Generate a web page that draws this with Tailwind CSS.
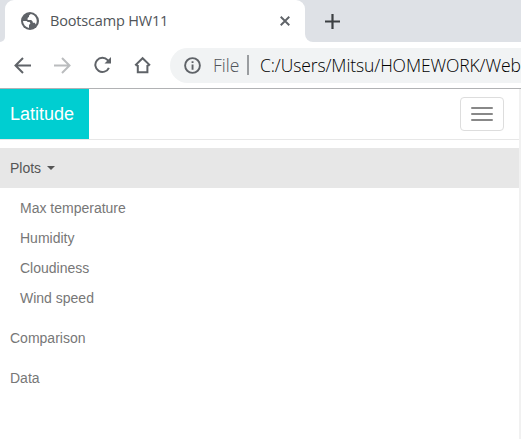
<!DOCTYPE html>
<html lang="en">
<head>
<meta charset="utf-8">
<title>Bootscamp HW11</title>
<script src="https://cdn.jsdelivr.net/npm/@tailwindcss/browser@4"></script>
</head>
<body class="w-[521px] h-[439px] overflow-hidden bg-white">
<div class="flex h-[439px] flex-col overflow-hidden">
  <div class="flex h-[42px] shrink-0 bg-white font-['Open_Sans',sans-serif]">
    <div class="h-full w-[5px] shrink-0 rounded-br-[5px] bg-[#dee1e6]"></div>
    <div class="h-full w-[300px] shrink-0 bg-[#dee1e6]">
      <div class="flex h-full items-center rounded-t-[9px] bg-white pl-4 pr-[15px]">
        <svg class="size-[18px] shrink-0" viewBox="0 0 18 18"><circle cx="9" cy="9" r="9" fill="#5f6368"/><path d="M9.8 2 8 3.4v1.4L6.6 6v2h3.6l1.6 1.8v1h2l1 1.6A7 7 0 0 0 9.8 2ZM2 9h3.6l1.2 1h1.8l.8 1.6-1.4 1.5v2.8A7 7 0 0 1 2 9Z" fill="#fff"/></svg>
        <div class="ml-[11px] whitespace-nowrap text-[14.5px] leading-5 tracking-[-0.17px] text-[#505458]">Bootscamp HW11</div>
        <svg class="ml-auto size-[10px]" viewBox="0 0 11 11" fill="none" stroke="#5f6368" stroke-width="2.1"><path d="m.8.8 9.4 9.4m0-9.4L.8 10.2"/></svg>
      </div>
    </div>
    <div class="flex h-full flex-1 items-center rounded-bl-[8px] bg-[#dee1e6] pl-5">
      <svg class="size-[15px]" viewBox="0 0 15 15" fill="none" stroke="#3c4043" stroke-width="2.2"><path d="M7.5 0v15M0 7.5h15"/></svg>
    </div>
  </div>
  <div class="flex h-[47px] shrink-0 items-center border-b border-[#b1b2b4] bg-white pl-[14px] font-['Open_Sans',sans-serif]">
    <svg class="size-[17px] shrink-0" viewBox="0 0 17 17" fill="none" stroke="#5f6368" stroke-width="2"><path d="M17 8.5H2M9 1 1.5 8.5 9 16"/></svg>
    <svg class="ml-[23px] size-[17px] shrink-0" viewBox="0 0 17 17" fill="none" stroke="#babcbe" stroke-width="2"><path d="M0 8.5h15M8 1l7.5 7.5L8 16"/></svg>
    <svg class="ml-[23px] size-[18px] shrink-0" viewBox="0 0 18 18"><path d="M14.9 11.8a7.1 7.1 0 1 1-1.2-7.7l1.2 1.4" fill="none" stroke="#5f6368" stroke-width="2"/><path d="M17 1v6.5h-6.5Z" fill="#5f6368"/></svg>
    <svg class="ml-[22px] size-[18px] shrink-0" viewBox="0 0 18 18" fill="none" stroke="#5f6368" stroke-width="2"><path d="M3.8 9v7.2h9.6V9M1.2 9.4 8.6 2.2 16 9.4M1.8 9.2h2M13.4 9.2h2"/></svg>
    <div class="ml-[18px] flex h-[35px] flex-1 items-center overflow-hidden rounded-l-full bg-[#f1f3f4] pl-[14px]">
      <svg class="size-[17px] shrink-0" viewBox="0 0 17 17"><circle cx="8.5" cy="8.5" r="7.4" fill="none" stroke="#5f6368" stroke-width="1.9"/><path d="M7.6 4.2h1.9v1.9H7.6ZM7.6 7.4h1.9v5.3H7.6Z" fill="#5f6368"/></svg>
      <div class="ml-3 w-[34px] shrink-0 whitespace-nowrap text-[17.5px] font-light leading-6 text-[#50545a]">File</div>
      <div class="h-5 w-[2px] shrink-0 bg-[#9a9da0]"></div>
      <div class="ml-[11px] shrink-0 whitespace-nowrap text-[17.5px] font-light leading-6 tracking-[-0.1px] text-black">C:/Users/Mitsu/HOMEWORK/Web</div>
    </div>
  </div>
  <div class="flex flex-1 font-['Liberation_Sans',Arial,sans-serif] text-sm leading-5 text-[#777]">
    <div class="flex-1">
      <header class="flex h-[51px] items-start justify-between border-b border-[#e7e7e7] pr-[15px]">
        <a class="flex h-[50px] w-[89px] items-center bg-[#00ced1] pl-[10px] text-lg text-white">Latitude</a>
        <button class="mt-2 flex h-[34px] w-[44px] flex-col items-center justify-center gap-1 rounded border border-[#ddd]" aria-label="Toggle navigation">
          <span class="h-[2px] w-[22px] rounded-[1px] bg-[#888]"></span>
          <span class="h-[2px] w-[22px] rounded-[1px] bg-[#888]"></span>
          <span class="h-[2px] w-[22px] rounded-[1px] bg-[#888]"></span>
        </button>
      </header>
      <nav class="pt-2">
        <a class="flex h-10 items-center gap-[6px] bg-[#e7e7e7] pl-[10px] text-[#555]">Plots<span class="border-x-4 border-t-4 border-x-transparent border-t-[#555]"></span></a>
        <div class="py-[5px]">
          <a class="block py-[5px] pl-5">Max temperature</a>
          <a class="block py-[5px] pl-5">Humidity</a>
          <a class="block py-[5px] pl-5">Cloudiness</a>
          <a class="block py-[5px] pl-5">Wind speed</a>
        </div>
        <a class="block py-[10px] pl-[10px]">Comparison</a>
        <a class="block py-[10px] pl-[10px]">Data</a>
      </nav>
    </div>
    <div class="w-[2px] bg-[#f1f1f1]"></div>
  </div>
</div>
</body>
</html>
